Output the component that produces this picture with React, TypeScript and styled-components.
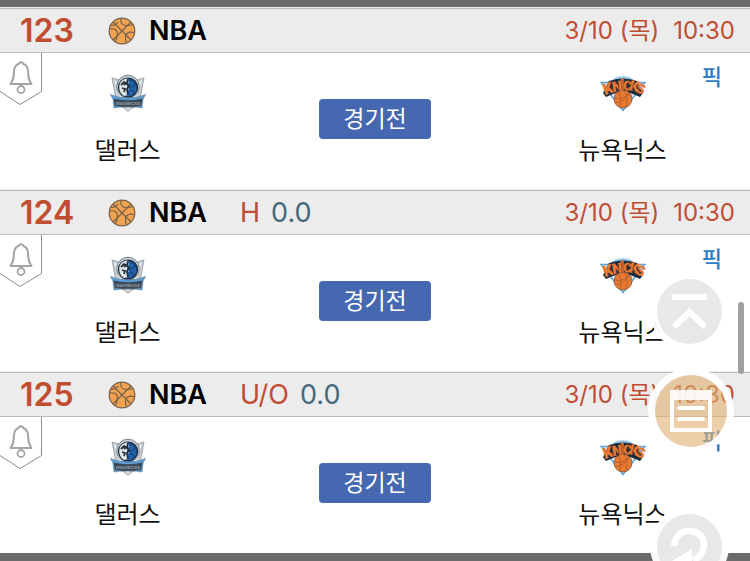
import React from "react";
import styled, { createGlobalStyle } from "styled-components";

const GlobalStyle = createGlobalStyle`
  * { box-sizing: border-box; }
  body {
    margin: 0;
    background: #6b6b6b;
    color: #111;
    font-family: Inter, "Noto Sans CJK KR", sans-serif;
    overflow: hidden;
  }
`;

const Page = styled.main`
  padding: 7px 0 8px;
`;

const List = styled.div`
  background: #fff;
  border-top: 1px solid #ececec;
`;

const Card = styled.article`
  border-bottom: 1px solid #ececec;
  &:last-child { border-bottom: 0; }
`;

const CardHeader = styled.header`
  display: flex;
  align-items: center;
  height: 45px;
  padding: 0 15px 0 20px;
  background: #ececec;
  border-top: 1px solid #bcbcbc;
  border-bottom: 1px solid #bcbcbc;
  white-space: nowrap;
`;

const GameNumber = styled.span`
  width: 88px;
  color: #c14d31;
  font-size: 32px;
  font-weight: 600;
`;

const League = styled.h2`
  display: flex;
  align-items: center;
  gap: 13px;
  width: 132px;
  margin: 0;
  color: #000;
  font-size: 27px;
  font-weight: 600;
`;

const Bet = styled.span`
  display: flex;
  gap: 11px;
  color: #c14d31;
  font-size: 27px;
`;

const BetValue = styled.span`
  color: #42687a;
`;

const StartTime = styled.time`
  display: flex;
  align-items: baseline;
  gap: 14px;
  margin-left: auto;
  color: #c14d31;
  font-size: 24px;
  line-height: 32px;
`;

const CardBody = styled.div`
  position: relative;
  display: grid;
  grid-template-columns: 34fr 32fr 34fr;
  height: 136px;
`;

const Team = styled.div`
  display: flex;
  flex-direction: column;
  align-items: center;
  gap: 21px;
  padding-top: 21px;
  font-size: 24px;
  line-height: 36px;
`;

const StatusCell = styled.div`
  display: flex;
  justify-content: center;
  align-items: flex-start;
  padding-top: 46px;
`;

const StatusButton = styled.button`
  width: 112px;
  height: 40px;
  padding: 0;
  border: 0;
  border-radius: 4px;
  background: #4568b0;
  color: #fff;
  font-family: inherit;
  font-size: 23px;
  line-height: 40px;
`;

const AlarmButton = styled.button`
  position: absolute;
  left: 0;
  top: 0;
  padding: 0;
  border: 0;
  background: none;
  svg { display: block; }
`;

const PickLink = styled.a`
  position: absolute;
  top: 8px;
  right: 28px;
  color: #2e7cc4;
  font-size: 22px;
  font-weight: 500;
  line-height: 32px;
  text-decoration: none;
`;

const FloatingButton = styled.button<{ $right: number; $bottom: number; $size: number; $fill: string }>`
  position: fixed;
  right: ${(p) => p.$right}px;
  bottom: ${(p) => p.$bottom}px;
  display: flex;
  align-items: center;
  justify-content: center;
  width: ${(p) => p.$size}px;
  height: ${(p) => p.$size}px;
  padding: 0;
  border: 0;
  border-radius: 50%;
  background: ${(p) => p.$fill};
  box-shadow: 0 0 0 7px rgba(255, 255, 255, 0.96);
  svg { flex: none; }
`;

const ScrollThumb = styled.div`
  position: fixed;
  top: 302px;
  right: 6px;
  width: 6px;
  height: 72px;
  border-radius: 3px;
  background: #a0a0a0;
`;

function Basketball() {
  return (
    <svg width="28" height="28" viewBox="0 0 28 28" fill="none" stroke="#75614c" strokeWidth="1.200" aria-hidden="true">
      <circle cx="14" cy="14" r="12.800" fill="#f2a350" />
      <path d="M5 5l18 18M23 5 5 23" />
      <path d="M13 1.500c-1 4 1 7 5 7 3 0 5 0 7-1M1.500 12c5-1 8 1 8 5 0 3-1 5-2 7.500M26.500 16c-5-2-9 0-9 4 0 3 0 4 1 5.500M3 8c3 1 5 0 7-3" />
    </svg>
  );
}

function AlarmIcon() {
  return (
    <svg width="43" height="53" viewBox="0 0 43 53" fill="none" stroke="#8c8c8c" aria-hidden="true">
      <path d="M41.500 0v38.500L20 51.500 0 38.500" />
      <path d="M10.500 31c2-3 3.300-4 3.300-11 0-6 2.200-8.500 5.200-9.300 0-2 4-2 4 0 3 .8 5.200 3.300 5.200 9.300 0 7 1.300 8 3.300 11z" stroke="#a4a4a4" strokeWidth="2" strokeLinejoin="round" />
      <circle cx="21" cy="36.500" r="3.500" stroke="#a4a4a4" strokeWidth="1.800" />
    </svg>
  );
}

function DallasLogo() {
  return (
    <svg width="36" height="38" viewBox="0 0 36 38" aria-label="댈러스" role="img">
      <path d="M2 4 9 6l9-4.500L27 6l7-2-4 21-12 12L6 25z" fill="#c9ced3" stroke="#8c969e" strokeWidth=".8" />
      <path d="m5 7 6 16M31 7l-6 16" stroke="#eef1f3" strokeWidth="1.500" />
      <circle cx="18" cy="12.500" r="11.300" fill="#c8ced3" stroke="#717e88" strokeWidth=".9" />
      <circle cx="18" cy="13.500" r="9.400" fill="#1f62ab" stroke="#1d2e3f" strokeWidth="1.400" />
      <path d="M18 4.500c-7 0-9.500 5-8.500 11 .5 3 2 5 4.500 6.500l4-1-1-4 2-2-2-3 2-4z" fill="#dfe4e7" />
      <path d="m11 11 3-3 2 1-2 2M12 14l3 1-1 3M18 5l-1 5 2 2-2 3 1 6" fill="none" stroke="#25303a" strokeWidth="1.800" />
      <path d="M20 6c4 1 6 4 7 8M19 13c4 0 6-2 6-4M20 16c3 0 4 2 4 4" fill="none" stroke="#163c66" />
      <path d="M.5 20.500Q8 24 18 24t17.500-3.500L33 25l-1 9-6-1-8 1-8-1-6 1-1-9z" fill="#5a9fd8" stroke="#4a7396" strokeWidth=".6" />
      <path d="M3.500 24.500q14.500 3.500 29 0L31 32q-13 2-26 0z" fill="#3d4a56" />
      <text x="18" y="31" textAnchor="middle" fill="#8d9ca8" fontFamily="Inter, sans-serif" fontSize="4" fontWeight="700">MAVERICKS</text>
      <path d="m13 33.500 5 4 5-4-5-.500z" fill="#d1d6d9" stroke="#87919a" strokeWidth=".6" />
    </svg>
  );
}

function KnicksLogo() {
  return (
    <svg width="46" height="38" viewBox="0 0 46 38" aria-label="뉴욕닉스" role="img">
      <path d="M1 8.500h44L23 36.500z" fill="#dcebf5" stroke="#5fa4d6" strokeWidth="1.400" />
      <path d="M12 6q11-8 22 0z" fill="#8cc0e4" />
      <path d="M15 3.500q8-2.500 16 0" stroke="#d8ebf5" strokeWidth="1.300" strokeDasharray="2 1" fill="none" />
      <path d="M9 7q14-5 28 0l6 12-3 4-7-3q-10-4-20 0l-7 3-3-4z" fill="#1b2b39" />
      <g fill="#e97832" stroke="#e97832" strokeWidth=".3" fontFamily="Roboto, sans-serif" fontWeight="900" fontSize="15">
        <text transform="translate(5 21) rotate(-18)">K</text>
        <text transform="translate(13 18) rotate(-9)" fontSize="14">N</text>
        <text x="20" y="16" fontSize="14">I</text>
        <text transform="translate(23 16) rotate(3)" fontSize="13">C</text>
        <text transform="translate(29 16) rotate(12)" fontSize="14">K</text>
        <text transform="translate(35 18) rotate(18)" fontSize="14">S</text>
      </g>
      <path d="m11 13 3 5M18 8l1 8M22 6v9M29 7l-1 8M34 9l-2 7" stroke="#6e3a1d" strokeWidth=".7" />
      <circle cx="23" cy="25" r="9" fill="#e87930" stroke="#7a5640" strokeWidth=".8" />
      <path d="M14 24q10 2 16-5M24 16q5 7 2 17M15 29q9-1 14-10M19 17q3 8 1 17" fill="none" stroke="#a85a2c" strokeWidth=".7" />
    </svg>
  );
}

const games = [
  { number: "123", bet: "", value: "" },
  { number: "124", bet: "H", value: "0.0" },
  { number: "125", bet: "U/O", value: "0.0" },
];

function GameCard({ number, bet, value }: (typeof games)[number]) {
  return (
    <Card>
      <CardHeader>
        <GameNumber>{number}</GameNumber>
        <League><Basketball />NBA</League>
        {bet && <Bet>{bet}<BetValue>{value}</BetValue></Bet>}
        <StartTime><span>3/10 (목)</span><span>10:30</span></StartTime>
      </CardHeader>
      <CardBody>
        <AlarmButton aria-label="알림"><AlarmIcon /></AlarmButton>
        <Team><DallasLogo /><span>댈러스</span></Team>
        <StatusCell><StatusButton>경기전</StatusButton></StatusCell>
        <Team><KnicksLogo /><span>뉴욕닉스</span></Team>
        <PickLink href="#pick">픽</PickLink>
      </CardBody>
    </Card>
  );
}

export default function App() {
  return (
    <>
      <GlobalStyle />
      <Page>
        <List>{games.map((game) => <GameCard key={game.number} {...game} />)}</List>
      </Page>
      <FloatingButton aria-label="맨 위로" $right={28} $bottom={217} $size={65} $fill="#e8e8e8">
        <svg width="37" height="38" viewBox="0 0 37 38" fill="none" stroke="#fff" strokeWidth="6">
          <path d="M1 4h35M3 34l15.500-15L34 34" />
        </svg>
      </FloatingButton>
      <FloatingButton aria-label="목록" $right={23} $bottom={114} $size={72} $fill="rgba(225, 178, 117, 0.62)">
        <svg width="42" height="42" viewBox="0 0 42 42" fill="none" stroke="#fff">
          <path d="M0 5h42" strokeWidth="10" strokeOpacity=".88" />
          <path d="M2 10v30h38V10" strokeWidth="4" />
          <path d="M9 18h24M9 29h24" strokeWidth="4" strokeLinecap="round" />
        </svg>
      </FloatingButton>
      <FloatingButton aria-label="새로고침" $right={28} $bottom={-18} $size={65} $fill="#e8e8e8">
        <svg width="40" height="40" viewBox="0 0 40 40" fill="none">
          <path d="M4 19C5 8 13 3 21 4s14 7 13 15-5 12-11 14" stroke="#fff" strokeWidth="6.500" />
          <path d="m2 34 20-12v18z" fill="#fff" />
        </svg>
      </FloatingButton>
      <ScrollThumb />
    </>
  );
}
